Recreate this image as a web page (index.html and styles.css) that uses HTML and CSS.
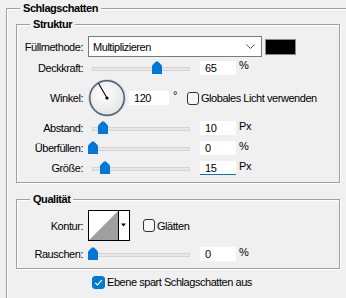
FILE: index.html
```html
<!DOCTYPE html>
<html>
<head lang="de">
    <meta charset="UTF-8">
    <link rel="stylesheet" href="styles.css">
    <title>Schlagschatten</title>
</head>
<body>
<fieldset class="group outer">
    <legend>Schlagschatten</legend>

    <fieldset class="group inner">
        <legend>Struktur</legend>

        <div class="row row_blend">
            <span class="lbl">Füllmethode:</span>
            <div class="select">
                <span>Multiplizieren</span>
                <svg width="9" height="5" viewBox="0 0 9 5"><polyline points="0.5,0.5 4.5,4.5 8.5,0.5" fill="none" stroke="#555"/></svg>
            </div>
            <div class="swatch"></div>
        </div>

        <div class="row row_tall">
            <span class="lbl">Deckkraft:</span>
            <div class="slider"><div class="track"></div><span class="thumb" style="left:64px"><svg width="10" height="13" viewBox="0 0 10 13"><path d="M0 4.5 L4 0.5 H6 L10 4.5 V13 H0 Z" fill="#0078d7"/></svg></span></div>
            <span class="num">65</span><span class="unit">%</span>
        </div>

        <div class="row row_dial">
            <span class="lbl">Winkel:</span>
            <svg class="dial" width="38" height="38" viewBox="0 0 38 38">
                <defs>
                    <radialGradient id="dg" cx="42%" cy="38%" r="65%">
                        <stop offset="0" stop-color="#ffffff"/>
                        <stop offset="1" stop-color="#e4e4e4"/>
                    </radialGradient>
                </defs>
                <circle cx="19" cy="19" r="18.3" fill="none" stroke="#c9cdd6" stroke-width="1"/>
                <circle cx="19" cy="19" r="17.2" fill="url(#dg)" stroke="#4d5a7a" stroke-width="1.5"/>
                <line x1="19" y1="19" x2="10.6" y2="4.5" stroke="#000" stroke-width="1.1"/>
                <circle cx="19" cy="19" r="1.6" fill="#000"/>
            </svg>
            <span class="num num_wide">120</span><span class="unit deg">°</span>
            <span class="check"></span><span class="check_text">Globales Licht verwenden</span>
        </div>

        <div class="row">
            <span class="lbl">Abstand:</span>
            <div class="slider"><div class="track"></div><span class="thumb" style="left:10px"><svg width="10" height="13" viewBox="0 0 10 13"><path d="M0 4.5 L4 0.5 H6 L10 4.5 V13 H0 Z" fill="#0078d7"/></svg></span></div>
            <span class="num">10</span><span class="unit">Px</span>
        </div>

        <div class="row">
            <span class="lbl">Überfüllen:</span>
            <div class="slider"><div class="track"></div><span class="thumb" style="left:0px"><svg width="10" height="13" viewBox="0 0 10 13"><path d="M0 4.5 L4 0.5 H6 L10 4.5 V13 H0 Z" fill="#0078d7"/></svg></span></div>
            <span class="num">0</span><span class="unit">%</span>
        </div>

        <div class="row">
            <span class="lbl">Größe:</span>
            <div class="slider"><div class="track"></div><span class="thumb" style="left:12px"><svg width="10" height="13" viewBox="0 0 10 13"><path d="M0 4.5 L4 0.5 H6 L10 4.5 V13 H0 Z" fill="#0078d7"/></svg></span></div>
            <span class="num focus">15</span><span class="unit">Px</span>
        </div>
    </fieldset>

    <fieldset class="group inner quality">
        <legend>Qualität</legend>

        <div class="row row_contour">
            <span class="lbl">Kontur:</span>
            <svg class="contour" width="42" height="31" viewBox="0 0 42 31">
                <rect x="0.5" y="0.5" width="41" height="30" fill="#fff" stroke="#000"/>
                <polygon points="1,30 30,1 30,30" fill="#a0a0a0"/>
                <line x1="30.5" y1="1" x2="30.5" y2="30" stroke="#000"/>
                <polygon points="33,13.5 38,13.5 35.5,16.5" fill="#000"/>
            </svg>
            <span class="check"></span><span class="check_text">Glätten</span>
        </div>

        <div class="row row_noise">
            <span class="lbl">Rauschen:</span>
            <div class="slider"><div class="track"></div><span class="thumb" style="left:0px"><svg width="10" height="13" viewBox="0 0 10 13"><path d="M0 4.5 L4 0.5 H6 L10 4.5 V13 H0 Z" fill="#0078d7"/></svg></span></div>
            <span class="num">0</span><span class="unit">%</span>
        </div>
    </fieldset>

    <div class="row row_layer">
        <span class="check checked"><svg width="13" height="13" viewBox="0 0 13 13"><polyline points="3.2,6.8 5.4,9 9.8,4.2" fill="none" stroke="#fff" stroke-width="1.2"/></svg></span>
        <span class="check_text">Ebene spart Schlagschatten aus</span>
    </div>
</fieldset>
</body>
</html>
```

FILE: styles.css
```css
* {
    box-sizing: border-box;
}

html, body {
    margin: 0;
    padding: 0;
    overflow: hidden;
}

body {
    width: 346px;
    height: 298px;
    background: #f0f0f0;
    color: #000;
    font-family: "Liberation Sans", Arial, sans-serif;
    font-size: 11px;
    letter-spacing: -0.45px;
}

/* group boxes */
.group {
    margin: 0;
    padding: 0;
    min-width: 0;
    border: 1px solid #a0a0a0;
    box-shadow: 1px 1px 0 #fff, inset 1px 1px 0 #fff;
}

.group > legend {
    padding: 0 3px;
    line-height: 15px;
    font-weight: bold;
    background: #f0f0f0;
}

/* outer box runs past the window, so no right/bottom edge */
.outer {
    margin: 1px 0 0 6px;
    padding: 1px 0 0 9px;
    width: 340px;
    height: 297px;
    border-right: none;
    border-bottom: none;
    box-shadow: inset 1px 1px 0 #fff;
}

.outer > legend {
    margin-left: 4px;
}

.inner {
    width: 324px;
    padding: 4px 0 4px 0;
}

.inner > legend {
    margin-left: 13px;
}

.quality {
    margin-top: 9px;
    padding: 3px 0 4px 0;
}

/* rows */
.row {
    display: flex;
    align-items: center;
    height: 20px;
}

.row_blend,
.row_tall {
    height: 21px;
}

.row_dial {
    height: 40px;
}

.row_contour {
    height: 31px;
}

.row_noise {
    margin-top: 3px;
}

.row_layer {
    margin: 3px 0 0 76px;
}

.lbl {
    width: 66px;
    margin-right: 5px;
    text-align: right;
    white-space: nowrap;
}

/* controls */
.select {
    display: flex;
    align-items: center;
    justify-content: space-between;
    width: 174px;
    height: 21px;
    padding: 0 6px 0 4px;
    background: #fff;
    border: 1px solid #7a7a7a;
}

.swatch {
    width: 31px;
    height: 16px;
    margin-left: 3px;
    background: #000;
    border: 1px solid #888;
}

.slider {
    position: relative;
    width: 104px;
    height: 14px;
    margin-right: 8px;
}

.track {
    height: 4px;
    margin: 6px 2px 0 4px;
    background: #e7e7e7;
    border: 1px solid #d4d4d4;
}

.thumb {
    position: absolute;
    top: 0;
    display: block;
    width: 10px;
    height: 13px;
}

.thumb svg {
    display: block;
}

.num {
    width: 36px;
    height: 14px;
    padding-left: 5px;
    line-height: 15px;
    background: #fff;
}

.num_wide {
    width: 40px;
}

.focus {
    border-bottom: 1px solid #0078d7;
    line-height: 14px;
}

.unit {
    align-self: flex-start;
    margin: 2px 0 0 3px;
    line-height: 13px;
}

.deg {
    margin: 11px 0 0 4px;
}

.dial {
    display: block;
    margin-right: 3px;
}

.contour {
    display: block;
}

.check {
    display: block;
    width: 12px;
    height: 13px;
    margin-left: 10px;
    background: #f7f7f7;
    border: 1px solid #333;
    border-radius: 3px;
}

.row_contour .check {
    margin-left: 13px;
}

.checked {
    width: 13px;
    height: 13px;
    margin-left: 0;
    background: #0078d7;
    border-color: #0078d7;
}

.checked svg {
    display: block;
    margin: -1px;
}

.check_text {
    margin-left: 2px;
    white-space: nowrap;
}
```
